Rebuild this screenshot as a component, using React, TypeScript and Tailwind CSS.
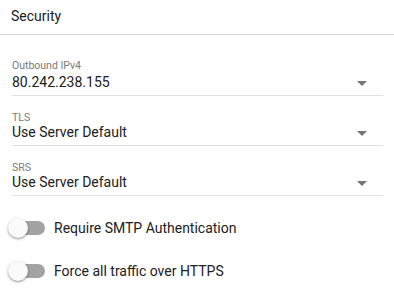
import { useState } from "react";

type SelectFieldProps = {
  label: string;
  value: string;
  /** el primer campo trae el label 2px más arriba */
  labelGap?: boolean;
  className?: string;
};

function ArrowDrop() {
  return (
    <svg viewBox="0 0 24 24" className="h-6 w-6 fill-[#757575]">
      <path d="M7 10l5 5 5-5z" />
    </svg>
  );
}

function SelectField({ label, value, labelGap, className }: SelectFieldProps) {
  return (
    <div className={`relative border-b border-[#e0e0e0] pb-[4px] ${className ?? ""}`}>
      <div
        className={`h-[10px] text-[10.5px] leading-[10px] text-[#7a7a7a] ${labelGap ? "mb-[2px]" : ""}`}
      >
        {label}
      </div>
      <div className="text-[14px] leading-[18px] text-[#212121]">{value}</div>
      <div className="absolute bottom-0 right-[9px]">
        <ArrowDrop />
      </div>
    </div>
  );
}

function Toggle({ label }: { label: string }) {
  const [on, setOn] = useState(false);
  return (
    <label className="flex h-[38px] cursor-pointer items-center">
      <span className="relative ml-[11px] block h-[14px] w-[34px] rounded-full bg-[#a3a3a3]">
        <span
          className={`absolute top-[-3px] block h-5 w-5 rounded-full bg-[#fafafa] shadow-[0_1px_3px_rgba(0,0,0,0.35),0_1px_1px_rgba(0,0,0,0.14)] ${on ? "left-[17px]" : "left-[-3px]"}`}
        />
      </span>
      <input
        type="checkbox"
        className="hidden"
        checked={on}
        onChange={() => setOn(!on)}
      />
      <span className="ml-[9px] text-[14px] leading-5 text-[#212121]">{label}</span>
    </label>
  );
}

export default function App() {
  return (
    <div
      className="h-[296px] w-[394px] overflow-hidden bg-white"
      style={{ fontFamily: "Roboto, 'Liberation Sans', sans-serif" }}
    >
      <div className="h-[35px] border-b border-[#d6d6d6] pl-[11px] pt-[6px] text-[14px] leading-5 text-[#212121]">
        Security
      </div>

      <div className="flex flex-col gap-[17px] pl-3 pr-[11px] pt-[26px]">
        <SelectField label="Outbound IPv4" value="80.242.238.155" labelGap />
        <SelectField label="TLS" value="Use Server Default" />
        <SelectField label="SRS" value="Use Server Default" />
      </div>

      <div className="mt-[13px] flex flex-col gap-[5px]">
        <Toggle label="Require SMTP Authentication" />
        <Toggle label="Force all traffic over HTTPS" />
      </div>
    </div>
  );
}
